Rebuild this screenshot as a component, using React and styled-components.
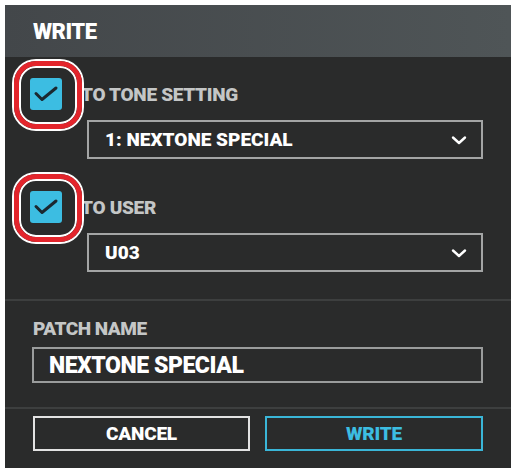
import React from "react";
import styled, { createGlobalStyle } from "styled-components";

const Global = createGlobalStyle`
  html, body { margin: 0; padding: 0; background: #ffffff; }
  body { font-family: Roboto, "Liberation Sans", sans-serif; }
  * { box-sizing: border-box; }
`;

const Panel = styled.div`
  margin: 5px 3px 0 5px;
  width: 506px;
  height: 463px;
  background: #2a2b2b;
  display: flex;
  flex-direction: column;
`;

const Header = styled.div`
  height: 52px;
  background: linear-gradient(to right, #43474a, #4f5557);
  display: flex;
  align-items: center;
  padding-left: 28px;
  color: #ffffff;
  font-weight: 900;
  font-size: 22px;
  letter-spacing: -0.5px;
`;

const Section = styled.div`
  display: flex;
  flex-direction: column;
  padding: ${(p) => p.$pad};
  border-bottom: ${(p) => (p.$divider ? "2px solid #3d3f3f" : "none")};
`;

const CheckRow = styled.div`
  display: flex;
  align-items: center;
  gap: 19px;
  padding-left: 25px;
  height: 32px;
  margin-top: ${(p) => p.$top || "0"};
`;

const BoxWrap = styled.span`
  position: relative;
  width: 32px;
  height: 32px;
  flex: none;
`;

const Box = styled.span`
  display: block;
  width: 32px;
  height: 32px;
  border-radius: 3px;
  background: #3cbde2;
`;

const Ring = styled.span`
  position: absolute;
  left: -16px;
  top: -17px;
  width: 68px;
  height: 68px;
  border: 5px solid #e3252c;
  border-radius: 22px;
  box-shadow: 0 0 0 2px #ffffff, inset 0 0 0 2px #ffffff;
  z-index: 2;
`;

const Label = styled.span`
  color: #c4c6c6;
  font-weight: 900;
  font-size: 19px;
  letter-spacing: -0.3px;
  position: relative;
  z-index: 1;
`;

const Select = styled.div`
  margin: 10px 28px 0 82px;
  height: 39px;
  border: 2px solid #a3a5a5;
  display: flex;
  align-items: center;
  justify-content: space-between;
  padding: 0 14px 0 16px;
  color: #ffffff;
  font-weight: 900;
  font-size: 19px;
  letter-spacing: 0;
`;

const FieldLabel = styled.div`
  color: #c4c6c6;
  font-weight: 900;
  font-size: 19px;
  letter-spacing: -0.5px;
  margin-left: 28px;
  line-height: 20px;
`;

const Input = styled.div`
  margin: 8px 28px 0 27px;
  height: 36px;
  border: 2px solid #9a9c9c;
  display: flex;
  align-items: center;
  padding-left: 15px;
  color: #ffffff;
  font-weight: 900;
  font-size: 23px;
  letter-spacing: -0.45px;
`;

const Buttons = styled.div`
  display: grid;
  grid-template-columns: 217px 218px;
  justify-content: space-between;
  padding: 7px 28px 0 28px;
`;

const Button = styled.div`
  height: 35px;
  border: 2px solid ${(p) => (p.$primary ? "#3ab6d8" : "#e2e2e2")};
  color: ${(p) => (p.$primary ? "#3cbde2" : "#ffffff")};
  display: flex;
  align-items: center;
  justify-content: center;
  font-weight: 900;
  font-size: 19px;
  letter-spacing: -0.2px;
`;

const Check = () => (
  <svg width="32" height="32" viewBox="0 0 32 32">
    <path d="M6 15.5 L12 21.5 L26 10" fill="none" stroke="#1b2830" strokeWidth="3" strokeLinecap="round" strokeLinejoin="round" />
  </svg>
);

const Chevron = () => (
  <svg width="16" height="10" viewBox="0 0 16 10">
    <path d="M2 2.5 L8 8 L14 2.5" fill="none" stroke="#ffffff" strokeWidth="2.4" strokeLinecap="round" strokeLinejoin="round" />
  </svg>
);

const CheckOption = ({ label, value, top }) => (
  <>
    <CheckRow $top={top}>
      <BoxWrap>
        <Box>
          <Check />
        </Box>
        <Ring />
      </BoxWrap>
      <Label>{label}</Label>
    </CheckRow>
    <Select>
      <span>{value}</span>
      <Chevron />
    </Select>
  </>
);

export default function App() {
  return (
    <>
      <Global />
      <Panel>
        <Header>WRITE</Header>
        <Section $pad="21px 0 27px 0" $divider>
          <CheckOption label="TO TONE SETTING" value="1: NEXTONE SPECIAL" />
          <CheckOption label="TO USER" value="U03" top="32px" />
        </Section>
        <Section $pad="18px 0 24px 0" $divider>
          <FieldLabel>PATCH NAME</FieldLabel>
          <Input>NEXTONE SPECIAL</Input>
        </Section>
        <Buttons>
          <Button>CANCEL</Button>
          <Button $primary>WRITE</Button>
        </Buttons>
      </Panel>
    </>
  );
}
